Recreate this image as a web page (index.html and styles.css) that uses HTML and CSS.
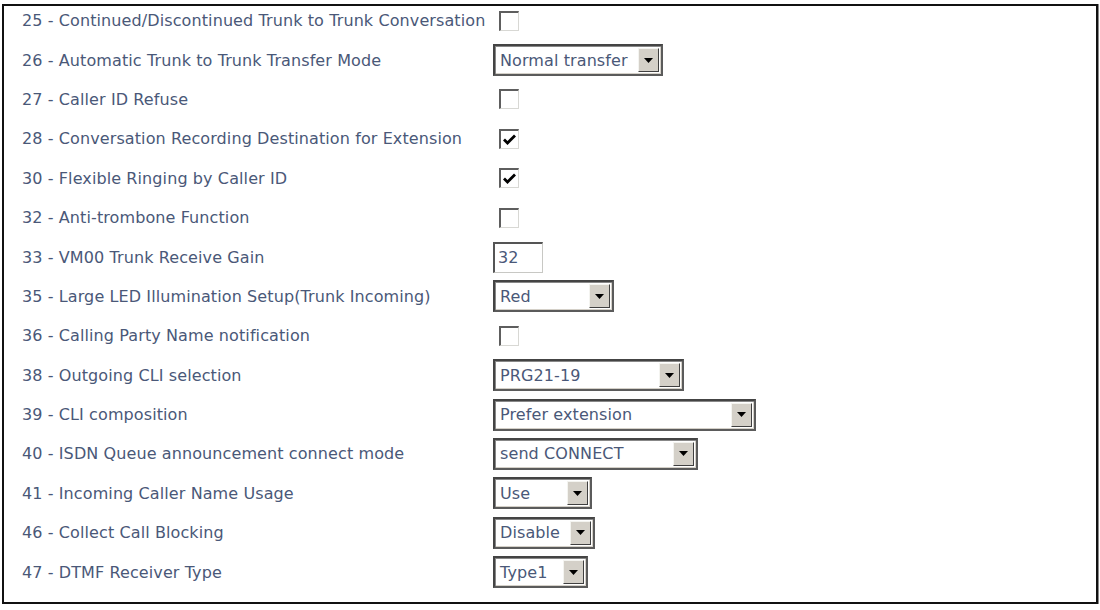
FILE: index.html
```html
<!DOCTYPE html>
<html>
<head>
<meta charset="utf-8">
<link rel="stylesheet" href="styles.css">
</head>
<body>
<div class="frame">
 <div class="list">
  <div class="row"><div class="label">25 - Continued/Discontinued Trunk to Trunk Conversation</div><div class="ctl"><span class="cb"></span></div></div>
  <div class="row"><div class="label">26 - Automatic Trunk to Trunk Transfer Mode</div><div class="ctl"><div class="sel" style="width:170px"><span class="val">Normal transfer</span><span class="btn"><svg width="9" height="5" viewBox="0 0 9 5"><path d="M0 0h9L4.5 5z" fill="#000"/></svg></span></div></div></div>
  <div class="row"><div class="label">27 - Caller ID Refuse</div><div class="ctl"><span class="cb"></span></div></div>
  <div class="row"><div class="label">28 - Conversation Recording Destination for Extension</div><div class="ctl"><span class="cb checked"><svg width="13" height="11" viewBox="0 0 13 11"><path d="M1 5.5l3.5 3.5L12 1.5" fill="none" stroke="#000" stroke-width="2.8"/></svg></span></div></div>
  <div class="row"><div class="label">30 - Flexible Ringing by Caller ID</div><div class="ctl"><span class="cb checked"><svg width="13" height="11" viewBox="0 0 13 11"><path d="M1 5.5l3.5 3.5L12 1.5" fill="none" stroke="#000" stroke-width="2.8"/></svg></span></div></div>
  <div class="row"><div class="label">32 - Anti-trombone Function</div><div class="ctl"><span class="cb"></span></div></div>
  <div class="row"><div class="label">33 - VM00 Trunk Receive Gain</div><div class="ctl"><span class="txt">32</span></div></div>
  <div class="row"><div class="label">35 - Large LED Illumination Setup(Trunk Incoming)</div><div class="ctl"><div class="sel" style="width:121px"><span class="val">Red</span><span class="btn"><svg width="9" height="5" viewBox="0 0 9 5"><path d="M0 0h9L4.5 5z" fill="#000"/></svg></span></div></div></div>
  <div class="row"><div class="label">36 - Calling Party Name notification</div><div class="ctl"><span class="cb"></span></div></div>
  <div class="row"><div class="label">38 - Outgoing CLI selection</div><div class="ctl"><div class="sel" style="width:191px"><span class="val">PRG21-19</span><span class="btn"><svg width="9" height="5" viewBox="0 0 9 5"><path d="M0 0h9L4.5 5z" fill="#000"/></svg></span></div></div></div>
  <div class="row"><div class="label">39 - CLI composition</div><div class="ctl"><div class="sel" style="width:263px"><span class="val">Prefer extension</span><span class="btn"><svg width="9" height="5" viewBox="0 0 9 5"><path d="M0 0h9L4.5 5z" fill="#000"/></svg></span></div></div></div>
  <div class="row"><div class="label">40 - ISDN Queue announcement connect mode</div><div class="ctl"><div class="sel" style="width:205px"><span class="val">send CONNECT</span><span class="btn"><svg width="9" height="5" viewBox="0 0 9 5"><path d="M0 0h9L4.5 5z" fill="#000"/></svg></span></div></div></div>
  <div class="row"><div class="label">41 - Incoming Caller Name Usage</div><div class="ctl"><div class="sel" style="width:99px"><span class="val">Use</span><span class="btn"><svg width="9" height="5" viewBox="0 0 9 5"><path d="M0 0h9L4.5 5z" fill="#000"/></svg></span></div></div></div>
  <div class="row"><div class="label">46 - Collect Call Blocking</div><div class="ctl"><div class="sel" style="width:102px"><span class="val">Disable</span><span class="btn"><svg width="9" height="5" viewBox="0 0 9 5"><path d="M0 0h9L4.5 5z" fill="#000"/></svg></span></div></div></div>
  <div class="row"><div class="label">47 - DTMF Receiver Type</div><div class="ctl"><div class="sel" style="width:95px"><span class="val">Type1</span><span class="btn"><svg width="9" height="5" viewBox="0 0 9 5"><path d="M0 0h9L4.5 5z" fill="#000"/></svg></span></div></div></div>
 </div>
</div>
</body>
</html>
```
FILE: styles.css
```css
html, body {
  margin: 0;
  padding: 0;
  background: #fff;
}
body {
  font-family: "DejaVu Sans", sans-serif;
  font-size: 16px;
  letter-spacing: 0.1px;
  color: #4a5878;
}
.frame {
  margin: 4px 0 0 2px;
  width: 1092px;
  height: 596px;
  border: 2px solid #111;
  box-shadow: 1px 0 0 #888;
}
.list {
  margin-top: -5px;
}
.row {
  display: grid;
  grid-template-columns: 489px 1fr;
  align-items: center;
  height: 39.4px;
}
.label {
  padding-left: 18px;
  white-space: nowrap;
}
.ctl {
  display: flex;
  align-items: center;
}
.cb {
  margin-left: 6px;
  width: 20px;
  height: 20px;
  box-sizing: border-box;
  background: #fff;
  border-style: solid;
  border-width: 2px 1px 1px 2px;
  border-color: #5e5e5e #d8d8d4 #d8d8d4 #5e5e5e;
  display: flex;
  align-items: center;
  justify-content: center;
}
.cb svg { display: block; }
.sel {
  height: 32px;
  box-sizing: border-box;
  border: 2px solid #5b5b5b;
  border-top-color: #444;
  border-left-color: #444;
  background: #fff;
  display: flex;
  align-items: stretch;
  padding: 1px;
  box-shadow: inset 1px 1px 0 #888, inset -1px -1px 0 #d4d0c8;
}
.val {
  flex: 1;
  display: flex;
  align-items: center;
  padding-left: 4px;
  white-space: nowrap;
  overflow: hidden;
}
.btn {
  width: 21px;
  margin: 1px 1px 1px 0;
  box-sizing: border-box;
  background: #d4d0c8;
  border-style: solid;
  border-width: 1px;
  border-color: #f4f4f0 #404040 #404040 #f4f4f0;
  display: flex;
  align-items: center;
  justify-content: center;
}
.btn svg { display: block; }
.txt {
  width: 50px;
  height: 31px;
  box-sizing: border-box;
  border-style: solid;
  border-width: 2px 1px 1px 2px;
  border-color: #555 #c8c8c4 #c8c8c4 #555;
  padding-left: 3px;
  display: flex;
  align-items: center;
}
```
